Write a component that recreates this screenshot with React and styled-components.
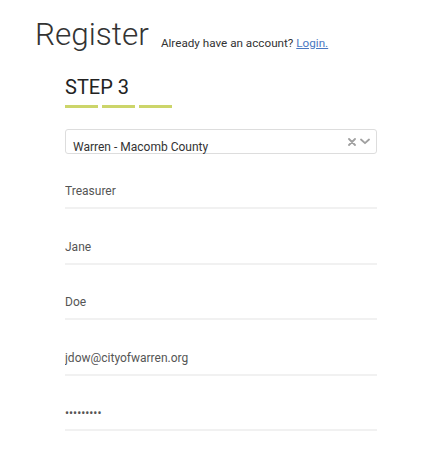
import styled, { createGlobalStyle } from "styled-components";

const GlobalStyle = createGlobalStyle`
  body {
    margin: 0;
    background: #fff;
    font-family: Roboto, "Liberation Sans", sans-serif;
    color: #444;
  }
`;

const fields = [
  { type: "text", value: "Treasurer" },
  { type: "text", value: "Jane" },
  { type: "text", value: "Doe" },
  { type: "email", value: "jdow@cityofwarren.org" },
  { type: "password", value: "password1" },
];

const App = () => {
  return (
    <Page>
      <GlobalStyle />
      <Header>
        <Title>Register</Title>
        <Already>
          Already have an account? <LoginLink href="#">Login.</LoginLink>
        </Already>
      </Header>
      <Form>
        <Step>STEP 3</Step>
        <Progress>
          <Bar />
          <Bar />
          <Bar />
        </Progress>
        <Select>
          <SelectValue>Warren - Macomb County</SelectValue>
          <SelectIcons>
            <svg width="8" height="8" viewBox="0 0 8 8">
              <path d="M1 1 L7 7 M7 1 L1 7" stroke="#a0a0a0" strokeWidth="1.8" strokeLinecap="round" />
            </svg>
            <svg width="10" height="7" viewBox="0 0 10 7">
              <path d="M1 1.5 L5 5.2 L9 1.5" stroke="#a0a0a0" strokeWidth="1.8" fill="none" strokeLinecap="round" strokeLinejoin="round" />
            </svg>
          </SelectIcons>
        </Select>
        {fields.map((f, i) => (
          <Field key={i} type={f.type} defaultValue={f.value} $first={i === 0} />
        ))}
      </Form>
    </Page>
  );
};

export default App;

const Page = styled.div`
  padding: 16px 0 0 35px;
`;
const Header = styled.div`
  display: flex;
  align-items: baseline;
  gap: 12px;
`;
const Title = styled.h1`
  margin: 0;
  font-size: 31.5px;
  font-weight: 300;
  line-height: 38px;
  color: #333;
`;
const Already = styled.span`
  font-size: 11.7px;
  color: #333;
  transform: translateY(2px);
`;
const LoginLink = styled.a`
  color: #4a78c2;
  text-decoration: underline;
`;
const Form = styled.div`
  width: 312px;
  margin: 21px 0 0 30px;
  display: flex;
  flex-direction: column;
`;
const Step = styled.div`
  font-size: 20px;
  line-height: 24px;
  color: #222;
`;
const Progress = styled.div`
  display: flex;
  gap: 4px;
  margin-top: 6px;
`;
const Bar = styled.div`
  width: 33px;
  height: 3px;
  background: #ccd56a;
`;
const Select = styled.div`
  margin-top: 21px;
  height: 23px;
  border: 1px solid #ddd;
  border-radius: 3px;
  display: flex;
  align-items: center;
  justify-content: space-between;
  padding: 0 6px 0 7px;
`;
const SelectValue = styled.span`
  font-size: 12px;
  color: #333;
  padding-top: 10px;
`;
const SelectIcons = styled.div`
  display: flex;
  align-items: center;
  gap: 4px;
`;
const Field = styled.input`
  margin-top: ${(p) => (p.$first ? "21px" : "21.5px")};
  height: 32px;
  padding: 0;
  border: none;
  border-bottom: 2px solid #f1f1f1;
  outline: none;
  font-family: Roboto, "Liberation Sans", sans-serif;
  font-size: 12px;
  color: #555;
  background: transparent;
`;
